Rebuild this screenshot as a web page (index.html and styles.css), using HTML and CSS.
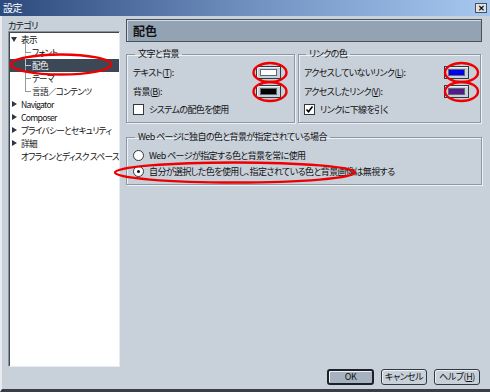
FILE: index.html
```html
<!DOCTYPE html>
<html lang="ja">
<head>
<meta charset="utf-8">
<link rel="stylesheet" href="styles.css">
</head>
<body>
<div class="window">
  <div class="titlebar">
    <span class="title">設定</span>
    <span class="close">✕</span>
  </div>
  <div class="main">
    <div class="left">
      <div class="cat-label">カテゴリ</div>
      <div class="tree">
        <div class="row"><span class="tri open"></span>表示</div>
        <div class="row child"><span class="branch"></span>フォント</div>
        <div class="row child sel"><span class="branch"></span>配色</div>
        <div class="row child"><span class="branch"></span>テーマ</div>
        <div class="row child last"><span class="branch"></span>言語／コンテンツ</div>
        <div class="row"><span class="tri"></span>Navigator</div>
        <div class="row"><span class="tri"></span>Composer</div>
        <div class="row"><span class="tri"></span>プライバシーとセキュリティ</div>
        <div class="row"><span class="tri"></span>詳細</div>
        <div class="row noicon">オフラインとディスク スペース</div>
      </div>
    </div>
    <div class="right">
      <div class="header">配色</div>
      <div class="groups">
        <fieldset class="group g1">
          <legend>文字と背景</legend>
          <div class="line"><span>テキスト(<u>T</u>):</span><span class="swatch"><i class="c-white"></i></span></div>
          <div class="line"><span>背景(<u>B</u>):</span><span class="swatch"><i class="c-black"></i></span></div>
          <div class="check"><span class="box"></span>システムの配色を使用</div>
        </fieldset>
        <fieldset class="group g2">
          <legend>リンクの色</legend>
          <div class="line"><span>アクセスしていないリンク(<u>L</u>):</span><span class="swatch"><i class="c-blue"></i></span></div>
          <div class="line"><span>アクセスしたリンク(<u>V</u>):</span><span class="swatch"><i class="c-purple"></i></span></div>
          <div class="check"><span class="box checked"><svg width="9" height="9" viewBox="0 0 9 9"><path d="M1.5 4.5 L3.5 6.8 L7.5 1.5" fill="none" stroke="#000" stroke-width="1.6"/></svg></span>リンクに下線を引く</div>
        </fieldset>
      </div>
      <fieldset class="group g3">
        <legend>Web ページに独自の色と背景が指定されている場合</legend>
        <div class="radio"><span class="dot"></span>Web ページが指定する色と背景を常に使用</div>
        <div class="radio"><span class="dot on"></span>自分が選択した色を使用し、指定されている色と背景画像は無視する</div>
      </fieldset>
    </div>
  </div>
  <div class="footer">
    <button class="btn default">OK</button>
    <button class="btn">キャンセル</button>
    <button class="btn">ヘルプ(<u>H</u>)</button>
  </div>
</div>
<svg class="marks" width="490" height="392" viewBox="0 0 490 392">
  <g fill="none" stroke="#ee0000" stroke-width="2.4">
    <ellipse cx="61" cy="64.5" rx="50" ry="10"/>
    <ellipse cx="270" cy="72.5" rx="16.5" ry="9.5"/>
    <ellipse cx="270" cy="91.5" rx="16.5" ry="9.5"/>
    <ellipse cx="461.5" cy="72.5" rx="16.5" ry="9.5"/>
    <ellipse cx="461.5" cy="91.5" rx="16.5" ry="9.5"/>
    <ellipse cx="235" cy="172.5" rx="120" ry="10"/>
  </g>
</svg>
</body>
</html>
```
FILE: styles.css
```css
* { box-sizing: border-box; }
html, body { margin: 0; padding: 0; }
body {
  width: 490px;
  height: 392px;
  overflow: hidden;
  position: relative;
  font-family: "Noto Sans CJK JP", "Noto Sans", sans-serif;
  font-size: 9px;
  font-feature-settings: "palt";
  letter-spacing: -0.6px;
  color: #111;
  background: #c8d0da;
  white-space: nowrap;
}
u { text-decoration: underline; }
.window {
  width: 490px;
  height: 392px;
  border-left: 2px solid #e8ecf0;
  border-bottom: 3px solid #3a3e44;
  background: #c8d0da;
  display: flex;
  flex-direction: column;
}
.titlebar {
  height: 16px;
  margin-left: -2px;
  background: linear-gradient(to right, #2c4a7c, #6f8fbf 50%, #a6c8f0);
  display: flex;
  align-items: center;
  justify-content: space-between;
  padding: 0 3px 0 3px;
}
.title {
  color: #fff;
  font-size: 10px;
  line-height: 14px;
}
.close {
  width: 12px;
  height: 10px;
  background: #dfe3e8;
  border: 1px solid #4a4e56;
  font-size: 8px;
  line-height: 8px;
  text-align: center;
  font-weight: bold;
  color: #000;
  letter-spacing: 0;
}
.main {
  display: flex;
  gap: 6px;
  padding: 3px 9px 0 6px;
}
.left {
  width: 112px;
  display: flex;
  flex-direction: column;
}
.cat-label {
  height: 12px;
  line-height: 12px;
  margin-top: 1px;
}
.tree {
  margin-top: -1px;
  height: 336px;
  background: #fff;
  border: 1px solid #8a929c;
  border-right-color: #e8ecf0;
  border-bottom-color: #e8ecf0;
  box-shadow: inset 1px 1px 0 #404850;
  padding: 1px 1px 0 1px;
  overflow: hidden;
  font-size: 8.6px;
  letter-spacing: -0.7px;
}
.row {
  position: relative;
  height: 13px;
  line-height: 13px;
  padding-left: 11px;
  color: #111;
}
.tri {
  position: absolute;
  left: 2px;
  top: 3px;
  width: 0;
  height: 0;
  border-top: 3.5px solid transparent;
  border-bottom: 3.5px solid transparent;
  border-left: 5px solid #334;
}
.tri.open {
  left: 1px;
  top: 4px;
  border-left: 3.5px solid transparent;
  border-right: 3.5px solid transparent;
  border-top: 5px solid #334;
  border-bottom: 0;
}
.row.child { padding-left: 22px; }
.branch {
  position: absolute;
  left: 15px;
  top: -6px;
  width: 6px;
  height: 13px;
  border-left: 1px solid #9098a0;
  border-bottom: 1px solid #9098a0;
}
.row.sel {
  background: #3c4856;
  color: #fff;
  margin-right: -1px;
}
.row.sel .branch { border-color: #c0c8d0; }
.right {
  width: 356px;
  display: flex;
  flex-direction: column;
}
.header {
  height: 23px;
  background: #93a3b4;
  border: 1px solid #48525e;
  box-shadow: inset 1px 1px 0 #d4dbe2;
  font-size: 12px;
  letter-spacing: 0;
  font-weight: bold;
  line-height: 21px;
  padding-left: 6px;
  color: #111;
}
.groups {
  display: flex;
  gap: 3px;
  margin-top: 6px;
}
.group {
  margin: 0;
  border: 1px solid #8e98a4;
  box-shadow: 1px 1px 0 #eef1f4, inset 1px 1px 0 #eef1f4;
  padding: 3px 6px 5px 6px;
}
legend {
  padding: 0 3px;
  margin-left: 2px;
  line-height: 12px;
}
.group.g1 { width: 169px; height: 75px; }
.group.g2 { width: 183px; height: 75px; padding-left: 5px; }
.line {
  display: flex;
  justify-content: space-between;
  align-items: center;
  height: 19px;
}
.g1 .line { padding-right: 7px; }
.g2 .line { padding-right: 5px; }
.swatch {
  width: 25px;
  height: 13px;
  border: 1px solid #303840;
  background: #c8d0da;
  box-shadow: inset 1px 1px 0 #eef1f4;
  padding: 2px 3px;
  display: flex;
}
.swatch i { flex: 1; display: block; border: 1px solid #606870; }
.c-white { background: #fff; }
.c-black { background: #000; }
.c-blue { background: #0000ee; }
.c-purple { background: #551a8b; }
.check {
  display: flex;
  align-items: center;
  gap: 5px;
  height: 15px;
  margin-top: 1px;
}
.box {
  width: 11px;
  height: 11px;
  border: 1px solid #303840;
  background: #fff;
  display: flex;
  align-items: center;
  justify-content: center;
}
.group.g3 {
  width: 356px;
  height: 54px;
  margin-top: 8px;
  padding-top: 4px;
}
.radio {
  display: flex;
  align-items: center;
  gap: 5px;
  height: 16px;
}
.dot {
  width: 11px;
  height: 11px;
  border: 1px solid #303840;
  background: #fff;
  border-radius: 50%;
  position: relative;
}
.dot.on::after {
  content: "";
  position: absolute;
  left: 3px;
  top: 3px;
  width: 3px;
  height: 3px;
  border-radius: 50%;
  background: #111;
}
.footer {
  display: flex;
  justify-content: flex-end;
  gap: 7px;
  padding: 0 10px 0 0;
  margin-top: auto;
  margin-bottom: 4px;
}
.btn {
  width: 46px;
  height: 16px;
  padding: 0;
  font-family: "Noto Sans CJK JP", "Noto Sans", sans-serif;
  font-size: 9px;
  font-feature-settings: "palt";
  letter-spacing: -0.5px;
  line-height: 12px;
  color: #111;
  background: #c8d0da;
  border: 1px solid #303840;
  border-radius: 3px;
  box-shadow: inset 1px 1px 0 #eef1f4;
  white-space: nowrap;
}
.btn.default {
  width: 47px;
  border: 2px solid #1c2028;
  background: #a6b2c0;
}
.marks {
  position: absolute;
  left: 0;
  top: 0;
  pointer-events: none;
}
```
